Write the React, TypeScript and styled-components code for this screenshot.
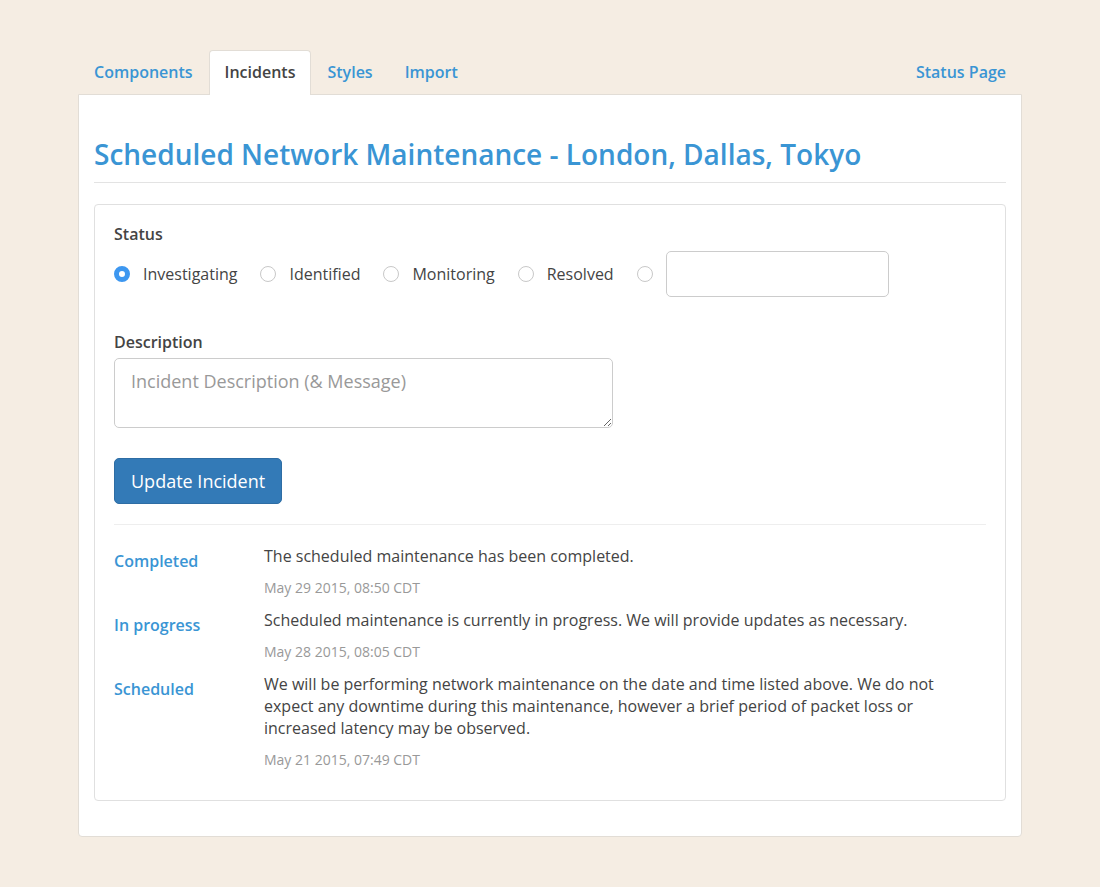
import React from "react";
import styled, { createGlobalStyle } from "styled-components";

const Global = createGlobalStyle`
  html, body { margin: 0; padding: 0; }
  body {
    background: #f5ede3;
    font-family: "Open Sans", "Liberation Sans", sans-serif;
    font-size: 16px;
    line-height: 22px;
    color: #444;
  }
  * { box-sizing: border-box; }
`;

const Page = styled.div`
  padding: 50px 78px 50px 78px;
`;

const Tabs = styled.nav`
  display: flex;
  align-items: flex-end;
  height: 44px;
`;

const Tab = styled.a<{ $active?: boolean }>`
  display: block;
  padding: 10px 15px 11px;
  margin-right: 0;
  font-weight: 600;
  font-size: 16px;
  line-height: 22px;
  color: ${(p) => (p.$active ? "#444" : "#3a95d4")};
  background: ${(p) => (p.$active ? "#fff" : "transparent")};
  border: 1px solid ${(p) => (p.$active ? "#e2ddd6" : "transparent")};
  border-bottom: none;
  border-radius: 4px 4px 0 0;
  height: 45px;
  margin-bottom: -1px;
  position: relative;
  z-index: 1;
  text-decoration: none;
`;

const Spacer = styled.div`
  flex: 1;
`;

const Panel = styled.main`
  background: #fff;
  border: 1px solid #e2ddd6;
  border-radius: 0 0 4px 4px;
  padding: 41px 15px 35px 15px;
`;

const Title = styled.h1`
  margin: 0;
  padding-bottom: 10px;
  font-size: 28px;
  line-height: 36px;
  font-weight: 600;
  color: #3a95d4;
  border-bottom: 1px solid #e3e3e3;
`;

const Box = styled.section`
  margin-top: 21px;
  border: 1px solid #e0e0e0;
  border-radius: 4px;
  padding: 18px 19px 19px;
`;

const Label = styled.div`
  font-weight: 600;
  color: #444;
  font-size: 16px;
  line-height: 22px;
`;

const RadioRow = styled.div`
  display: flex;
  align-items: center;
  margin-top: 6px;
  height: 46px;
`;

const RadioItem = styled.label`
  display: flex;
  align-items: center;
  margin-right: 23px;
  color: #444;
`;

const RadioCircle = styled.span<{ $checked?: boolean }>`
  width: 16px;
  height: 16px;
  border-radius: 50%;
  border: ${(p) => (p.$checked ? "5px solid #3d97f0" : "1px solid #c8c8c8")};
  background: #fff;
  margin-right: 13px;
  flex: none;
`;

const TextInput = styled.input`
  width: 223px;
  height: 46px;
  border: 1px solid #ccc;
  border-radius: 5px;
  font: inherit;
  padding: 0 12px;
`;

const Field = styled.div`
  margin-top: 34px;
`;

const TextArea = styled.textarea`
  display: block;
  margin-top: 5px;
  width: 499px;
  height: 70px;
  border: 1px solid #ccc;
  border-radius: 5px;
  font-family: "Open Sans", "Liberation Sans", sans-serif;
  font-size: 18px;
  line-height: 24px;
  padding: 10px 16px;
  color: #444;
  &::placeholder { color: #999; }
`;

const Button = styled.button`
  display: block;
  margin-top: 30px;
  height: 46px;
  padding: 0 16px;
  background: #337ab7;
  border: 1px solid #2e6da4;
  border-radius: 5px;
  color: #fff;
  font-family: "Open Sans", "Liberation Sans", sans-serif;
  font-size: 18px;
`;

const Divider = styled.hr`
  border: none;
  border-top: 1px solid #eee;
  margin: 20px 0 20px;
`;

const Update = styled.div`
  display: grid;
  grid-template-columns: 150px 1fr;
  margin-bottom: 11px;
`;

const UpdateStatus = styled.div`
  font-weight: 600;
  color: #3a95d4;
  padding-top: 5px;
`;

const UpdateBody = styled.div`
  color: #444;
  max-width: 700px;
`;

const UpdateDate = styled.div`
  margin-top: 11px;
  font-size: 14px;
  line-height: 20px;
  color: #999;
`;

const updates = [
  {
    status: "Completed",
    text: "The scheduled maintenance has been completed.",
    date: "May 29 2015, 08:50 CDT",
  },
  {
    status: "In progress",
    text: "Scheduled maintenance is currently in progress. We will provide updates as necessary.",
    date: "May 28 2015, 08:05 CDT",
  },
  {
    status: "Scheduled",
    text: "We will be performing network maintenance on the date and time listed above. We do not expect any downtime during this maintenance, however a brief period of packet loss or increased latency may be observed.",
    date: "May 21 2015, 07:49 CDT",
  },
];

export default function App() {
  return (
    <Page>
      <Global />
      <Tabs>
        <Tab>Components</Tab>
        <Tab $active>Incidents</Tab>
        <Tab>Styles</Tab>
        <Tab>Import</Tab>
        <Spacer />
        <Tab>Status Page</Tab>
      </Tabs>
      <Panel>
        <Title>Scheduled Network Maintenance - London, Dallas, Tokyo</Title>
        <Box>
          <Label>Status</Label>
          <RadioRow>
            <RadioItem>
              <RadioCircle $checked />
              Investigating
            </RadioItem>
            <RadioItem>
              <RadioCircle />
              Identified
            </RadioItem>
            <RadioItem>
              <RadioCircle />
              Monitoring
            </RadioItem>
            <RadioItem>
              <RadioCircle />
              Resolved
            </RadioItem>
            <RadioItem>
              <RadioCircle />
              <TextInput />
            </RadioItem>
          </RadioRow>
          <Field>
            <Label>Description</Label>
            <TextArea placeholder="Incident Description (& Message)" />
          </Field>
          <Button>Update Incident</Button>
          <Divider />
          {updates.map((u) => (
            <Update key={u.status}>
              <UpdateStatus>{u.status}</UpdateStatus>
              <UpdateBody>
                {u.text}
                <UpdateDate>{u.date}</UpdateDate>
              </UpdateBody>
            </Update>
          ))}
        </Box>
      </Panel>
    </Page>
  );
}
